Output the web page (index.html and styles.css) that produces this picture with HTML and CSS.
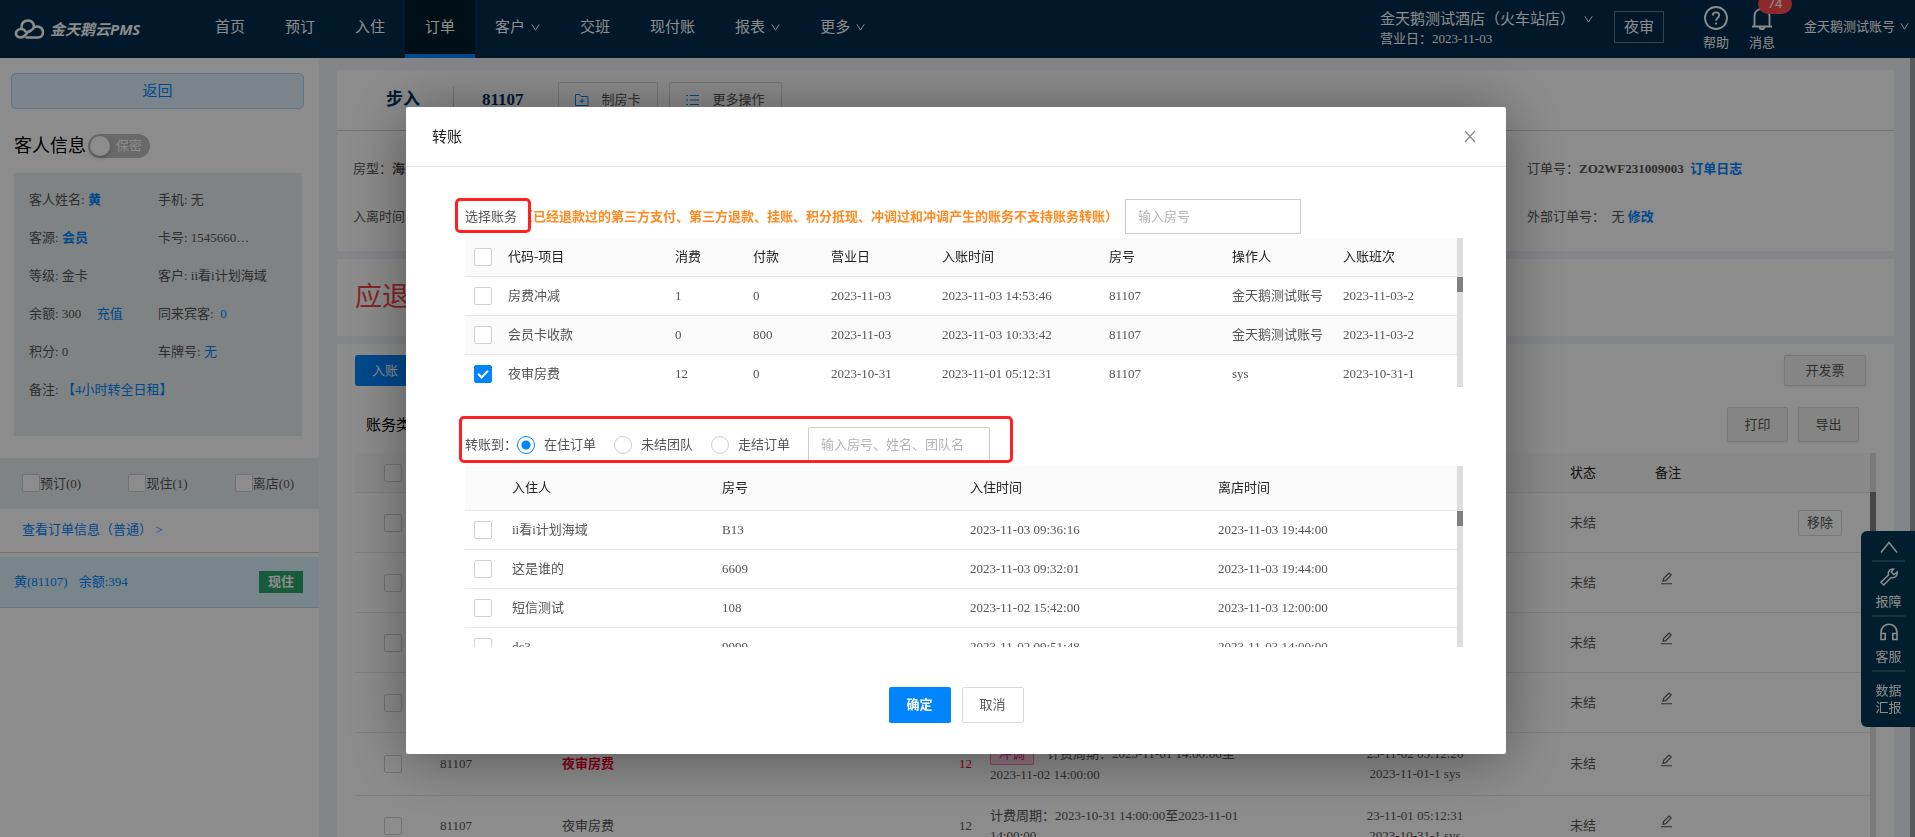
FILE: index.html
```html
<!DOCTYPE html>
<html lang="zh-CN">
<head>
    <meta charset="UTF-8">
    <meta name="viewport" content="width=device-width, initial-scale=1.0">
    <title>金天鹅云PMS - 订单</title>
    <link rel="stylesheet" href="styles.css">
</head>
<body>
    <svg class="sprite" width="0" height="0" aria-hidden="true">
        <symbol id="icon-down" viewBox="0 0 10 10">
            <path d="M1 1.5L5 8l4-6.5" fill="none" stroke="currentColor" stroke-width="1.1" />
        </symbol>
        <symbol id="icon-edit" viewBox="0 0 14 14">
            <path d="M1 12.7h12M3.2 10l.6-2.9 6-6 2.3 2.1-6 6.1z" fill="none" stroke="currentColor" stroke-width="1.2" />
        </symbol>
    </svg>

    <div class="app">
        <header class="topbar">
            <a class="logo" href="#">
                <svg width="31" height="20" viewBox="0 0 31 20" fill="none" stroke="currentColor" stroke-width="2.6" stroke-linecap="round">
                    <path d="M11.5 12.5C10 9.500 5 9 2.800 12c-2 3 0 6.500 3.700 6.500 5 0 5.500-4 8-6" />
                    <path d="M7.500 8.500C7 4.500 10 1.500 14 1.500c4.500 0 7 4 5.500 7.500-1 2-2.500 2.500-4 3.500" />
                    <path d="M20.500 8c4-1.500 8.500 1 8.500 5 0 3-2 5.500-5 5.500H12.500" />
                </svg>
                <span>金天鹅云PMS</span>
            </a>
            <nav class="menu">
                <a href="#">首页</a>
                <a href="#">预订</a>
                <a href="#">入住</a>
                <a href="#" class="active">订单</a>
                <a href="#">客户<svg class="arrow"><use href="#icon-down" /></svg></a>
                <a href="#">交班</a>
                <a href="#">现付账</a>
                <a href="#">报表<svg class="arrow"><use href="#icon-down" /></svg></a>
                <a href="#">更多<svg class="arrow"><use href="#icon-down" /></svg></a>
            </nav>
            <div class="hotel">
                <div class="hotel-name">金天鹅测试酒店（火车站店）<svg class="arrow"><use href="#icon-down" /></svg></div>
                <div class="hotel-date">营业日：2023-11-03</div>
            </div>
            <button class="audit-btn">夜审</button>
            <a class="top-icon" href="#">
                <svg width="24" height="24" viewBox="0 0 24 24" fill="none" stroke="currentColor" stroke-width="1.800">
                    <circle cx="12" cy="12" r="11" />
                    <path d="M8.800 9.500c0-4.300 6.400-4.300 6.400 0 0 2.500-3.200 2.500-3.200 5.300M12 16.500v2" />
                </svg>
                <span>帮助</span>
            </a>
            <a class="top-icon" href="#">
                <svg width="24" height="24" viewBox="0 0 24 24" fill="none" stroke="currentColor" stroke-width="1.800">
                    <path d="M2 20.500h20M4.500 20V10c0-9.500 15-9.500 15 0v10M9.500 21c.5 2.800 4.500 2.800 5 0" />
                </svg>
                <span>消息</span>
                <em class="badge">74</em>
            </a>
            <a class="account" href="#">金天鹅测试账号<svg class="arrow"><use href="#icon-down" /></svg></a>
        </header>

        <div class="page">
            <aside class="sidebar">
                <button class="back-btn">返回</button>
                <div class="guest-title">
                    <h2>客人信息</h2>
                    <button class="switch" role="switch" aria-checked="false"><i></i>保密</button>
                </div>
                <div class="guest-info">
                    <div>客人姓名: <a href="#"><b>黄</b></a></div>
                    <div>手机: 无</div>
                    <div>客源: <a href="#"><b>会员</b></a></div>
                    <div>卡号: 1545660…</div>
                    <div>等级: 金卡</div>
                    <div>客户: ii看i计划海域</div>
                    <div>余额: 300 <a href="#" class="recharge">充值</a></div>
                    <div>同来宾客: &nbsp;<a href="#">0</a></div>
                    <div>积分: 0</div>
                    <div>车牌号: <a href="#">无</a></div>
                    <div class="wide">备注: <a href="#">【4小时转全日租】</a></div>
                </div>
                <div class="filters">
                    <label><input type="checkbox">预订(0)</label>
                    <label><input type="checkbox">现住(1)</label>
                    <label><input type="checkbox">离店(0)</label>
                </div>
                <a class="order-link" href="#">查看订单信息（普通） &gt;</a>
                <a class="order-item" href="#">
                    <span>黄(81107)</span>
                    <span>余额:394</span>
                    <b class="state">现住</b>
                </a>
            </aside>

            <main class="content">
                <section class="card order-card">
                    <div class="order-head">
                        <span class="order-type">步入</span>
                        <span class="order-room">81107</span>
                        <button class="tool-btn">
                            <svg width="14" height="12" viewBox="0 0 14 12" fill="none" stroke="currentColor">
                                <path d="M.5 11.500V.5h4l1.500 2h7v9zM7 4.500v5M4.500 7h5" />
                            </svg>
                            制房卡
                        </button>
                        <button class="tool-btn">
                            <svg width="14" height="12" viewBox="0 0 14 12" fill="none" stroke="currentColor">
                                <path d="M0 1.500h2M4 1.500h9M0 6h2M4 6h9M0 10.500h2M4 10.500h9" />
                            </svg>
                            更多操作
                        </button>
                    </div>
                    <div class="order-body">
                        <div>房型：<b>海景房</b></div>
                        <div>订单号：<b>ZO2WF231009003</b> &nbsp;<a href="#"><b>订单日志</b></a></div>
                        <div>入离时间：</div>
                        <div>外部订单号：&nbsp; 无 <a href="#"><b>修改</b></a></div>
                    </div>
                </section>

                <section class="card refund-card">应退</section>

                <section class="card bill-card">
                    <div class="bill-actions">
                        <button class="primary small">入账</button>
                        <button class="grey-btn invoice">开发票</button>
                    </div>
                    <div class="bill-filter">
                        <h3>账务类型</h3>
                        <button class="grey-btn">打印</button>
                        <button class="grey-btn">导出</button>
                    </div>
                    <div class="scroll-box">
                        <table class="bill-table">
                            <colgroup>
                                <col class="b-check"><col class="b-room"><col><col class="b-amount"><col class="b-desc">
                                <col class="b-time"><col class="b-status"><col class="b-note"><col class="b-action">
                            </colgroup>
                            <thead>
                                <tr>
                                    <th class="check"><input type="checkbox" aria-label="全选"></th>
                                    <th></th><th></th><th></th><th></th><th></th>
                                    <th>状态</th>
                                    <th>备注</th>
                                    <th></th>
                                </tr>
                            </thead>
                            <tbody>
                                <tr>
                                    <td class="check"><input type="checkbox" aria-label="选择"></td>
                                    <td></td><td></td><td></td><td></td><td></td>
                                    <td>未结</td>
                                    <td></td>
                                    <td><button class="remove-btn">移除</button></td>
                                </tr>
                                <tr>
                                    <td class="check"><input type="checkbox" aria-label="选择"></td>
                                    <td></td><td></td><td></td><td></td><td></td>
                                    <td>未结</td>
                                    <td><svg class="edit"><use href="#icon-edit" /></svg></td>
                                    <td></td>
                                </tr>
                                <tr>
                                    <td class="check"><input type="checkbox" aria-label="选择"></td>
                                    <td></td><td></td><td></td><td></td><td></td>
                                    <td>未结</td>
                                    <td><svg class="edit"><use href="#icon-edit" /></svg></td>
                                    <td></td>
                                </tr>
                                <tr>
                                    <td class="check"><input type="checkbox" aria-label="选择"></td>
                                    <td></td><td></td><td></td><td></td><td></td>
                                    <td>未结</td>
                                    <td><svg class="edit"><use href="#icon-edit" /></svg></td>
                                    <td></td>
                                </tr>
                                <tr class="tall">
                                    <td class="check"><input type="checkbox" aria-label="选择"></td>
                                    <td>81107</td>
                                    <td class="red"><b>夜审房费</b></td>
                                    <td class="amount red">12</td>
                                    <td><span class="tag">冲调</span>计费周期：2023-11-01 14:00:00至2023-11-02 14:00:00</td>
                                    <td class="time">23-11-02 05:12:26<br>2023-11-01-1 sys</td>
                                    <td>未结</td>
                                    <td><svg class="edit"><use href="#icon-edit" /></svg></td>
                                    <td></td>
                                </tr>
                                <tr>
                                    <td class="check"><input type="checkbox" aria-label="选择"></td>
                                    <td>81107</td>
                                    <td>夜审房费</td>
                                    <td class="amount">12</td>
                                    <td>计费周期：2023-10-31 14:00:00至2023-11-01 14:00:00</td>
                                    <td class="time">23-11-01 05:12:31<br>2023-10-31-1 sys</td>
                                    <td>未结</td>
                                    <td><svg class="edit"><use href="#icon-edit" /></svg></td>
                                    <td></td>
                                </tr>
                            </tbody>
                        </table>
                        <div class="scrollbar long"><i></i></div>
                    </div>
                </section>
            </main>
            <div class="page-scroll"></div>
        </div>

        <div class="float-bar">
            <a href="#" aria-label="收起">
                <svg width="18" height="12" viewBox="0 0 18 12" fill="none" stroke="currentColor" stroke-width="1.500"><path d="M1 11.500l8-10 8 10" /></svg>
            </a>
            <a href="#">
                <svg width="18" height="18" viewBox="0 0 18 18" fill="none" stroke="currentColor" stroke-width="1.500">
                    <path d="M13.500 1C10 .5 7.500 3.500 8.500 7L1 14.200 3.800 17l7.200-7.500c4 1 6.800-2 6.200-5.500L14 6.800 11.300 4z" />
                </svg>
                报障
            </a>
            <a href="#">
                <svg width="18" height="18" viewBox="0 0 18 18" fill="none" stroke="currentColor" stroke-width="1.600">
                    <path d="M1 16.500V9.500c0-11 16-11 16 0v7h-4.200V10.500H17M1 10.500h4.200v6H1z" />
                </svg>
                客服
            </a>
            <a href="#">数据<br>汇报</a>
        </div>
    </div>

    <div class="mask">
        <div class="modal" role="dialog" aria-labelledby="modal-title">
            <div class="modal-header">
                <h2 id="modal-title">转账</h2>
                <button class="close" aria-label="关闭">
                    <svg width="12" height="13" viewBox="0 0 12 13"><path d="M1 1l10 11M11 1L1 12" fill="none" stroke="currentColor" stroke-width="1.200" /></svg>
                </button>
            </div>
            <div class="modal-body">
                <div class="select-row">
                    <label class="marked" for="room-no">选择账务</label>
                    <b class="warn">（已经退款过的第三方支付、第三方退款、挂账、积分抵现、冲调过和冲调产生的账务不支持账务转账）</b>
                    <input type="text" id="room-no" class="text-input" placeholder="输入房号">
                </div>
                <div class="scroll-box account-box">
                    <table class="list account-table">
                        <colgroup>
                            <col class="a-check"><col><col class="a-num"><col class="a-num"><col class="a-day">
                            <col class="a-time"><col class="a-room"><col class="a-user"><col class="a-shift">
                        </colgroup>
                        <thead>
                            <tr>
                                <th><input type="checkbox" aria-label="全选"></th>
                                <th>代码-项目</th>
                                <th>消费</th>
                                <th>付款</th>
                                <th>营业日</th>
                                <th>入账时间</th>
                                <th>房号</th>
                                <th>操作人</th>
                                <th>入账班次</th>
                            </tr>
                        </thead>
                        <tbody>
                            <tr>
                                <td><input type="checkbox" aria-label="房费冲减"></td>
                                <td>房费冲减</td>
                                <td>1</td>
                                <td>0</td>
                                <td>2023-11-03</td>
                                <td>2023-11-03 14:53:46</td>
                                <td>81107</td>
                                <td>金天鹅测试账号</td>
                                <td>2023-11-03-2</td>
                            </tr>
                            <tr class="striped">
                                <td><input type="checkbox" aria-label="会员卡收款"></td>
                                <td>会员卡收款</td>
                                <td>0</td>
                                <td>800</td>
                                <td>2023-11-03</td>
                                <td>2023-11-03 10:33:42</td>
                                <td>81107</td>
                                <td>金天鹅测试账号</td>
                                <td>2023-11-03-2</td>
                            </tr>
                            <tr>
                                <td><input type="checkbox" aria-label="夜审房费" checked></td>
                                <td>夜审房费</td>
                                <td>12</td>
                                <td>0</td>
                                <td>2023-10-31</td>
                                <td>2023-11-01 05:12:31</td>
                                <td>81107</td>
                                <td>sys</td>
                                <td>2023-10-31-1</td>
                            </tr>
                        </tbody>
                    </table>
                    <div class="scrollbar"><i></i></div>
                </div>

                <div class="target-row">
                    <span>转账到：</span>
                    <label><input type="radio" name="target" checked>在住订单</label>
                    <label><input type="radio" name="target">未结团队</label>
                    <label><input type="radio" name="target">走结订单</label>
                    <input type="text" class="text-input" aria-label="转账目标" placeholder="输入房号、姓名、团队名">
                </div>
                <div class="scroll-box target-box">
                    <table class="list target-table">
                        <colgroup>
                            <col class="t-check"><col class="t-name"><col><col><col>
                        </colgroup>
                        <thead>
                            <tr>
                                <th></th>
                                <th>入住人</th>
                                <th>房号</th>
                                <th>入住时间</th>
                                <th>离店时间</th>
                            </tr>
                        </thead>
                        <tbody>
                            <tr>
                                <td><input type="checkbox" aria-label="B13"></td>
                                <td>ii看i计划海域</td>
                                <td>B13</td>
                                <td>2023-11-03 09:36:16</td>
                                <td>2023-11-03 19:44:00</td>
                            </tr>
                            <tr>
                                <td><input type="checkbox" aria-label="6609"></td>
                                <td>这是谁的</td>
                                <td>6609</td>
                                <td>2023-11-03 09:32:01</td>
                                <td>2023-11-03 19:44:00</td>
                            </tr>
                            <tr>
                                <td><input type="checkbox" aria-label="108"></td>
                                <td>短信测试</td>
                                <td>108</td>
                                <td>2023-11-02 15:42:00</td>
                                <td>2023-11-03 12:00:00</td>
                            </tr>
                            <tr>
                                <td><input type="checkbox" aria-label="9999"></td>
                                <td>dc3</td>
                                <td>9999</td>
                                <td>2023-11-02 09:51:48</td>
                                <td>2023-11-03 14:00:00</td>
                            </tr>
                        </tbody>
                    </table>
                    <div class="scrollbar low"><i></i></div>
                </div>
            </div>
            <div class="modal-footer">
                <button class="primary">确定</button>
                <button class="plain">取消</button>
            </div>
        </div>
    </div>
</body>
</html>
```

FILE: styles.css
```css
*, *::after {
    box-sizing: border-box;
}

body {
    margin: 0;
    font-family: "Liberation Serif", "Noto Sans CJK SC", serif;
    font-size: 13px;
    line-height: 20px;
    color: #555;
    overflow: hidden;
}

h2, h3 {
    margin: 0;
    font-weight: normal;
}

a {
    color: #0085ff;
    text-decoration: none;
}

button, input {
    font: inherit;
    color: inherit;
}

button {
    padding: 0;
    border: 1px solid #d9d9d9;
    border-radius: 2px;
    background: #fff;
    cursor: pointer;
}

table {
    width: 100%;
    border-collapse: separate;
    border-spacing: 0;
    table-layout: fixed;
}

th, td {
    padding: 0 8px;
    border-bottom: 1px solid #e8e8e8;
    text-align: left;
    font-weight: normal;
}

th {
    background: #fafafa;
    color: #222;
}

.sprite {
    position: absolute;
}

input[type="checkbox"], input[type="radio"] {
    appearance: none;
    flex: none;
    display: block;
    width: 18px;
    height: 18px;
    margin: 0;
    border: 1px solid #d0d0d0;
    border-radius: 2px;
    background: #fff;
}

input[type="checkbox"]:checked {
    border-color: #0085ff;
    background: #0085ff;
}

    input[type="checkbox"]:checked::after {
        content: "";
        display: block;
        width: 6px;
        height: 10px;
        margin: 2px 5px;
        border: solid #fff;
        border-width: 0 2px 2px 0;
        transform: rotate(45deg);
    }

input[type="radio"] {
    border-radius: 50%;
}

    input[type="radio"]:checked {
        border-color: #0085ff;
        background: radial-gradient(circle, #0085ff 4px, #fff 5px);
    }

.app {
    display: flex;
    flex-direction: column;
    height: 100vh;
}

/* top bar */
.topbar {
    flex: none;
    display: flex;
    align-items: center;
    height: 58px;
    padding-right: 6px;
    background: #002c4e;
    color: #fff;
}

    .topbar a {
        color: #fff;
    }

.arrow {
    width: 9px;
    height: 9px;
    margin-left: 6px;
}

.logo {
    display: flex;
    align-items: center;
    gap: 5px;
    width: 195px;
    padding-left: 14px;
    font-size: 15px;
    font-weight: bold;
    font-style: italic;
    font-family: "Noto Sans", "Noto Sans CJK SC", sans-serif;
}

.menu {
    display: flex;
    align-self: stretch;
    font-size: 15px;
}

    .menu a {
        padding: 12px 20px 0;
        line-height: 30px;
    }

    .menu .active {
        background: #001c2a;
        border-bottom: 4px solid #0085ff;
    }

.hotel {
    margin-left: auto;
    margin-right: 21px;
}

.hotel-name {
    font-size: 15px;
}

    .hotel-name .arrow {
        margin-left: 9px;
    }

.audit-btn {
    width: 50px;
    height: 32px;
    margin-right: 39px;
    margin-bottom: 4px;
    border-color: #5c7a8e;
    border-radius: 0;
    background: none;
    font-size: 15px;
}

.top-icon {
    position: relative;
    display: flex;
    flex-direction: column;
    align-items: center;
    gap: 3px;
    width: 26px;
    margin-right: 20px;
}

.badge {
    position: absolute;
    top: -12px;
    left: 9px;
    width: 34px;
    height: 20px;
    border-radius: 10px;
    background: #ff4d4f;
    font: 13px/20px Roboto, sans-serif;
    text-align: center;
}

.account {
    margin-bottom: 4px;
    margin-left: 9px;
}

    .account .arrow {
        margin-left: 5px;
    }

/* layout under the bar */
.page {
    flex: 1;
    display: flex;
    min-height: 0;
    background: #eef2f8;
}

.page-scroll {
    width: 5px;
    background: #9fa3a8;
}

.sidebar {
    width: 319px;
    background: #fff;
}

.back-btn {
    display: block;
    width: 293px;
    height: 36px;
    margin: 15px 0 0 11px;
    border-color: #a5d3fa;
    border-radius: 5px;
    background: #e1f0fd;
    color: #0085ff;
    font-size: 15px;
}

.guest-title {
    display: flex;
    align-items: center;
    gap: 2px;
    height: 24px;
    margin: 25px 14px 15px;
    color: #000;
}

    .guest-title h2 {
        font-size: 18px;
    }

.switch {
    display: flex;
    align-items: center;
    gap: 6px;
    width: 62px;
    height: 24px;
    padding: 0 2px;
    border: 0;
    border-radius: 12px;
    background: #bfbfbf;
    color: #fff;
}

    .switch i {
        width: 20px;
        height: 20px;
        border-radius: 50%;
        background: #fff;
        box-shadow: 0 2px 4px rgba(0, 0, 0, .2);
    }

.guest-info {
    display: grid;
    grid-template-columns: 129px 1fr;
    grid-auto-rows: 38px;
    align-items: center;
    height: 263px;
    margin: 0 17px 0 14px;
    padding: 8px 0 0 15px;
    align-content: start;
    background: #e9eeee;
}

    .guest-info .wide {
        grid-column: span 2;
    }

.recharge {
    margin-left: 12px;
}

.filters {
    display: flex;
    justify-content: space-between;
    align-items: center;
    height: 51px;
    margin-top: 22px;
    padding: 0 25px 0 22px;
    background: #e9eeee;
}

    .filters label {
        display: flex;
    }

.order-link {
    display: block;
    height: 44px;
    padding-left: 22px;
    border-bottom: 1px solid #ccc;
    line-height: 42px;
}

.order-item {
    display: flex;
    align-items: center;
    gap: 11px;
    height: 51px;
    margin-top: 4px;
    padding: 0 16px 0 14px;
    border-bottom: 1px solid #c5d5dc;
    background: #dbf2fc;
}

.state {
    width: 44px;
    margin-left: auto;
    background: #2ba76d;
    color: #fff;
    line-height: 22px;
    text-align: center;
}

.content {
    flex: 1;
    display: flex;
    flex-direction: column;
    gap: 8px;
    min-width: 0;
    padding: 12px 16px 0 18px;
}

.card {
    background: #fff;
}

.order-card {
    height: 181px;
}

.order-head {
    display: flex;
    align-items: center;
    height: 61px;
    padding-left: 49px;
    border-bottom: 1px solid #d0d0d0;
    font-size: 17px;
    color: #00355c;
}

.order-type {
    padding-right: 33px;
    border-right: 1px solid #ccc;
    font-weight: bold;
    line-height: 26px;
}

.order-room {
    margin: 0 34px 0 28px;
    font-weight: bold;
}

.tool-btn {
    display: flex;
    align-items: center;
    gap: 13px;
    height: 36px;
    margin-right: 11px;
    padding: 0 16px;
    color: #555;
    font-size: 13px;
}

    .tool-btn svg {
        color: #0085ff;
    }

.order-body {
    display: grid;
    grid-template-columns: 1fr 367px;
    row-gap: 28px;
    padding: 28px 0 0 16px;
}

.refund-card {
    height: 77px;
    padding-left: 18px;
    color: #f24545;
    font-size: 27px;
    line-height: 77px;
}

.bill-card {
    flex: 1;
    min-height: 0;
    padding: 11px 18px 0;
    overflow: hidden;
}

.primary {
    border: 0;
    background: #0085ff;
    color: #fff;
    font-weight: bold;
}

    .primary.small {
        width: 60px;
        height: 31px;
        border-radius: 3px;
        font-weight: normal;
    }

.grey-btn {
    width: 61px;
    height: 35px;
    background: #f2f2f2;
    box-shadow: 0 2px 2px rgba(0, 0, 0, .05);
}

.invoice {
    width: 82px;
    height: 31px;
}

.bill-actions {
    display: flex;
    justify-content: space-between;
    padding-right: 10px;
}

.bill-filter {
    display: flex;
    align-items: center;
    gap: 10px;
    padding: 21px 17px 11px 11px;
}

    .bill-filter h3 {
        flex: 1;
        color: #000;
        font-size: 15px;
    }

.scroll-box {
    display: flex;
    overflow: hidden;
}

    .scroll-box table {
        flex: 1;
        min-width: 0;
    }

.scrollbar {
    flex: none;
    align-self: stretch;
    width: 6px;
    padding-top: 39px;
    background: #dedede;
}

    .scrollbar i {
        display: block;
        height: 15px;
        background: #808080;
    }

    .scrollbar.low {
        padding-top: 45px;
    }

    .scrollbar.long i {
        height: 220px;
    }

.bill-table th {
    height: 40px;
}

.bill-table td {
    height: 60px;
}

.bill-table .tall td {
    height: 63px;
}

.bill-table .check {
    padding-left: 29px;
}

.bill-table .amount {
    padding-right: 10px;
    text-align: right;
}

.bill-table .time {
    text-align: center;
}

.bill-table .red {
    color: #f5002c;
}

.b-check {
    width: 77px;
}

.b-room {
    width: 122px;
}

.b-amount {
    width: 100px;
}

.b-desc {
    width: 286px;
}

.b-time {
    width: 294px;
}

.b-status {
    width: 85px;
}

.b-note {
    width: 143px;
}

.b-action {
    width: 80px;
}

.tag {
    display: inline-block;
    margin-right: 13px;
    padding: 0 8px;
    border: 1px solid #ff85b0;
    border-radius: 2px;
    background: #ffd6e7;
    color: #eb2f96;
}

.edit {
    display: block;
    width: 13px;
    height: 13px;
    margin: 0 0 8px 5px;
}

.remove-btn {
    width: 44px;
    height: 26px;
}

/* right floating bar */
.float-bar {
    position: fixed;
    top: 531px;
    right: 0;
    display: flex;
    flex-direction: column;
    width: 54px;
    height: 196px;
    padding: 0 10px 0 11px;
    border-radius: 6px 0 0 6px;
    background: #003852;
}

    .float-bar a {
        display: flex;
        flex-direction: column;
        align-items: center;
        gap: 6px;
        height: 55px;
        padding-top: 6px;
        border-bottom: 2px solid #2b5a73;
        color: #fff;
    }

    .float-bar a:first-child {
        height: 31px;
        padding-top: 10px;
    }

    .float-bar a:last-child {
        padding-top: 10px;
        border: 0;
        line-height: 17px;
    }

/* transfer dialog */
.mask {
    position: fixed;
    inset: 0;
    display: flex;
    justify-content: center;
    align-items: flex-start;
    padding: 107px 3px 0 0;
    background: rgba(0, 0, 0, .45);
}

.modal {
    width: 1100px;
    border-radius: 2px;
    background: #fff;
    box-shadow: 0 4px 60px rgba(0, 0, 0, .4);
}

.modal-header {
    display: flex;
    justify-content: space-between;
    align-items: center;
    height: 60px;
    padding: 0 30px 0 26px;
    border-bottom: 1px solid #e8e8e8;
    color: #222;
}

    .modal-header h2 {
        font-size: 15px;
    }

.close {
    display: flex;
    border: 0;
    color: #888;
}

.modal-body {
    padding: 32px 43px 0 59px;
}

.select-row {
    display: flex;
    align-items: center;
    gap: 3px;
    height: 35px;
    margin-bottom: 4px;
}

.marked, .target-row {
    position: relative;
}

    .marked::after, .target-row::after {
        content: "";
        position: absolute;
        top: -9px;
        left: -10px;
        width: 76px;
        height: 35px;
        border: 3px solid #ff2020;
        border-radius: 5px;
        pointer-events: none;
    }

    .target-row::after {
        top: -11px;
        left: -6px;
        width: 554px;
        height: 47px;
    }

.warn {
    color: #ff8a1f;
}

.text-input {
    width: 176px;
    height: 35px;
    margin-left: 4px;
    padding: 0 12px;
    border: 1px solid #ccc;
}

    .text-input::placeholder {
        color: #b5b5b5;
    }

.account-box {
    height: 149px;
}

.target-box {
    height: 181px;
}

.list th, .list td {
    height: 39px;
    padding-left: 9px;
}

.list .striped td {
    background: #fafafa;
}

.list.target-table th {
    height: 45px;
}

.a-check {
    width: 34px;
}

.a-num {
    width: 78px;
}

.a-day, .a-user {
    width: 111px;
}

.a-time {
    width: 167px;
}

.a-room, .a-shift {
    width: 123px;
}

.t-check {
    width: 38px;
}

.t-name {
    width: 210px;
}

.target-row {
    display: flex;
    align-items: center;
    height: 35px;
    margin: 40px 0 4px;
}

    .target-row label {
        display: flex;
        align-items: center;
        gap: 9px;
        margin-right: 18px;
    }

    .target-row .text-input {
        width: 182px;
        margin: 0;
        border-radius: 2px;
    }

.modal-footer {
    display: flex;
    justify-content: center;
    gap: 11px;
    padding: 40px 0 31px;
}

    .modal-footer button {
        width: 62px;
        height: 36px;
    }
```
